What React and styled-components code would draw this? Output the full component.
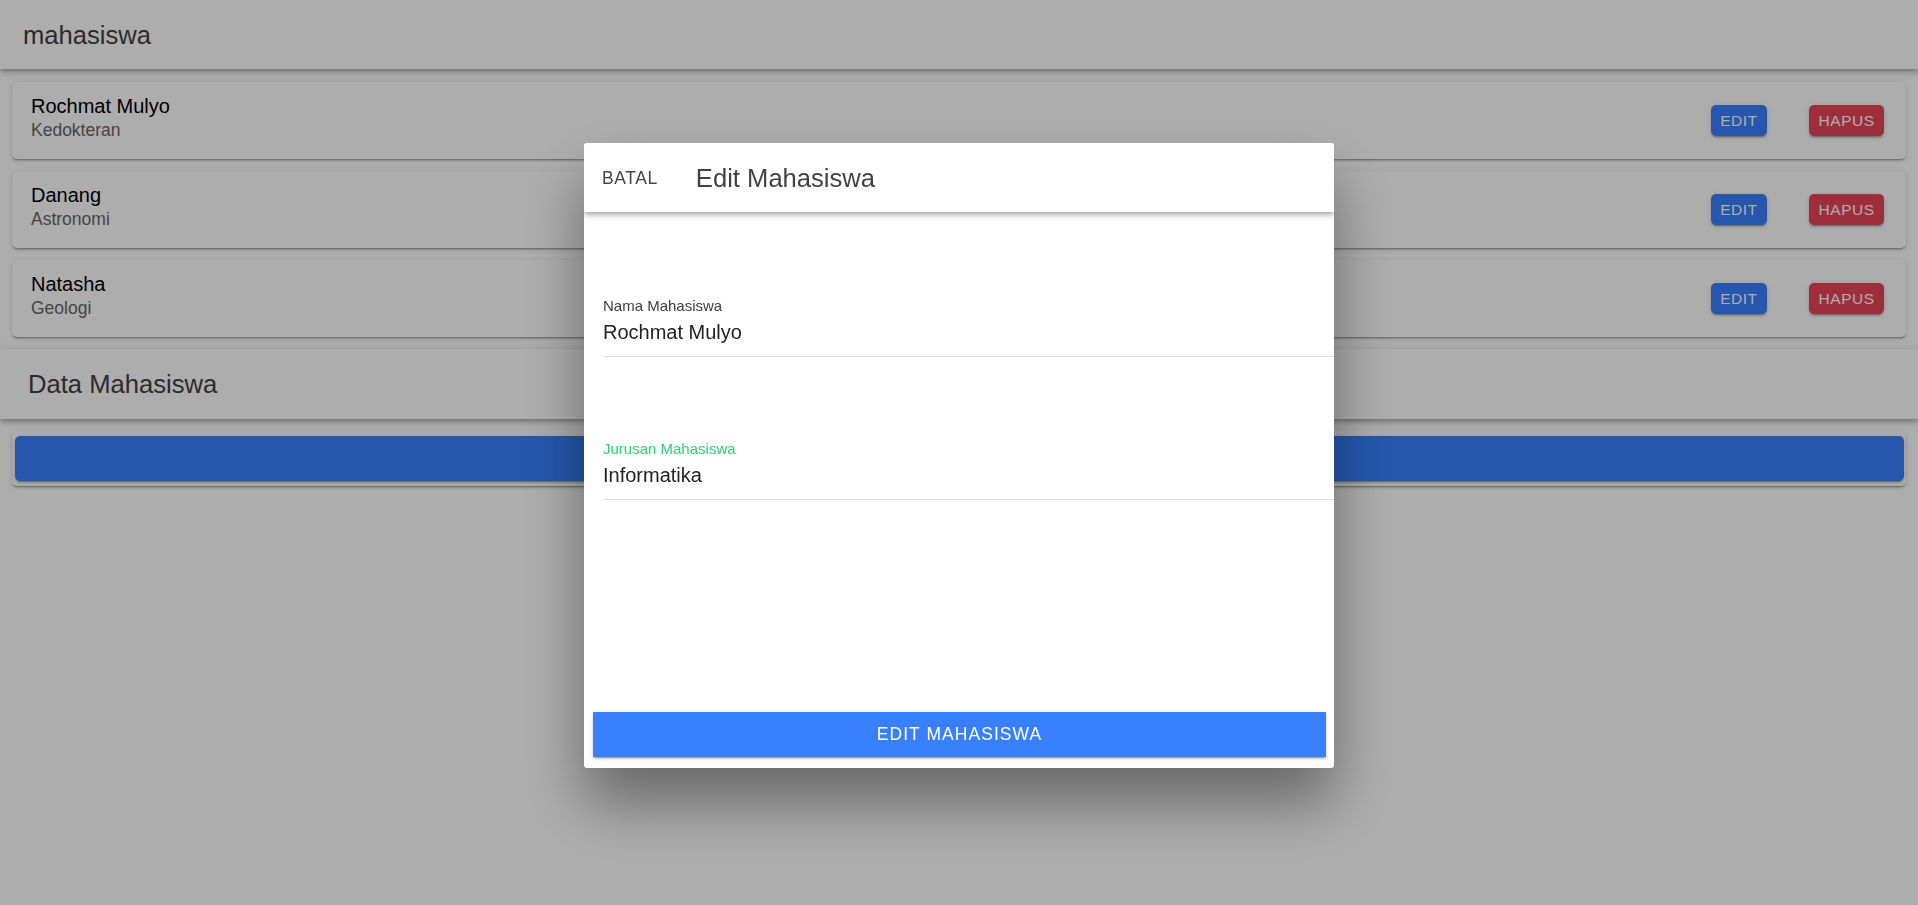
import React from "react";
import styled, { createGlobalStyle } from "styled-components";

const GlobalStyle = createGlobalStyle`
  html, body {
    margin: 0;
    padding: 0;
    background: #ffffff;
    font-family: "Liberation Sans", Arial, sans-serif;
  }
  * { box-sizing: border-box; }
`;

const toolbarShadow =
  "0 2px 4px -1px rgba(0,0,0,0.2), 0 4px 5px 0 rgba(0,0,0,0.14), 0 1px 10px 0 rgba(0,0,0,0.12)";
const cardShadow =
  "0 3px 1px -2px rgba(0,0,0,0.2), 0 2px 2px 0 rgba(0,0,0,0.14), 0 1px 5px 0 rgba(0,0,0,0.12)";

const Page = styled.div`
  min-height: 905px;
  display: flex;
  flex-direction: column;
  background: #fff;
`;

const Toolbar = styled.div`
  position: relative;
  z-index: 2;
  height: ${(p) => p.$h || 69}px;
  display: flex;
  align-items: center;
  padding-left: ${(p) => p.$pad || 23}px;
  background: #fff;
  box-shadow: ${toolbarShadow};
`;

const Title = styled.div`
  font-size: 25.6px;
  line-height: 30px;
  color: #424242;
`;

const CardList = styled.div`
  display: flex;
  flex-direction: column;
  gap: 12px;
  padding: ${(p) => p.$pad};
`;

const Card = styled.div`
  background: #fff;
  border-radius: 5px;
  box-shadow: ${cardShadow};
`;

const ItemCard = styled(Card)`
  height: 77px;
  display: flex;
  align-items: center;
  padding: 0 22px 0 19px;
`;

const ItemText = styled.div`
  flex: 1;
  display: flex;
  flex-direction: column;
  gap: 2.5px;
  padding-bottom: 6px;
`;

const Name = styled.div`
  font-size: 20px;
  line-height: 24px;
  color: #000;
`;

const Desc = styled.div`
  font-size: 17.5px;
  line-height: 21px;
  color: #666;
`;

const Actions = styled.div`
  display: flex;
  align-items: center;
  gap: 42px;
`;

const SmallButton = styled.button`
  height: 31px;
  padding: 0 9.5px;
  border: none;
  border-radius: 5px;
  background: ${(p) => p.$color};
  color: #fff;
  font-family: "Liberation Sans", Arial, sans-serif;
  font-size: 15.5px;
  letter-spacing: 0.5px;
  text-transform: uppercase;
  box-shadow: 0 3px 1px -2px rgba(0,0,0,0.2), 0 2px 2px 0 rgba(0,0,0,0.14), 0 1px 5px 0 rgba(0,0,0,0.12);
`;

const ButtonCard = styled(Card)`
  padding: 5px 2.5px;
`;

const BlockButton = styled.div`
  height: 45px;
  border-radius: 5px;
  background: #3880ff;
  box-shadow: 0 3px 1px -2px rgba(0,0,0,0.2), 0 2px 2px 0 rgba(0,0,0,0.14), 0 1px 5px 0 rgba(0,0,0,0.12);
`;

const Backdrop = styled.div`
  position: fixed;
  inset: 0;
  background: rgba(0, 0, 0, 0.32);
  z-index: 10;
`;

const ModalLayer = styled.div`
  position: fixed;
  inset: 0;
  z-index: 11;
  display: flex;
  justify-content: center;
  align-items: flex-start;
  padding-top: 143px;
`;

const Modal = styled.div`
  width: 750px;
  height: 625px;
  background: #fff;
  border-radius: 3px;
  box-shadow: 0 35px 60px rgba(0, 0, 0, 0.4);
  display: flex;
  flex-direction: column;
  overflow: hidden;
`;

const ModalHeader = styled.div`
  position: relative;
  z-index: 2;
  height: 69px;
  flex: none;
  display: flex;
  align-items: center;
  gap: 38px;
  padding-left: 18px;
  background: #fff;
  box-shadow: ${toolbarShadow};
`;

const TextButton = styled.button`
  border: none;
  background: none;
  padding: 0;
  font-family: "Liberation Sans", Arial, sans-serif;
  font-size: 17.5px;
  line-height: 20px;
  letter-spacing: 0.6px;
  color: #444;
  text-transform: uppercase;
`;

const ModalBody = styled.div`
  flex: 1;
  display: flex;
  flex-direction: column;
  padding: 1px 0 0 19px;
`;

const Field = styled.div`
  margin-top: ${(p) => p.$top}px;
  padding-bottom: 12px;
  border-bottom: 1px solid #dedede;
  display: flex;
  flex-direction: column;
  gap: 5.5px;
`;

const FieldLabel = styled.div`
  font-size: 15px;
  line-height: 18px;
  color: ${(p) => (p.$focused ? "#2dd36f" : "#3d3d3d")};
`;

const FieldValue = styled.div`
  font-size: 20px;
  line-height: 24px;
  color: #222;
`;

const SubmitButton = styled.button`
  flex: none;
  height: 45px;
  margin: 0 8px 11px 9px;
  border: none;
  background: #3880ff;
  color: #fff;
  font-family: "Liberation Sans", Arial, sans-serif;
  font-size: 17.5px;
  font-weight: 500;
  letter-spacing: 0.06em;
  text-transform: uppercase;
  box-shadow: 0 3px 1px -2px rgba(0,0,0,0.2), 0 2px 2px 0 rgba(0,0,0,0.14), 0 1px 5px 0 rgba(0,0,0,0.12);
`;

const students = [
  { name: "Rochmat Mulyo", major: "Kedokteran" },
  { name: "Danang", major: "Astronomi" },
  { name: "Natasha", major: "Geologi" },
];

export default function App() {
  return (
    <>
      <GlobalStyle />
      <Page>
        <Toolbar>
          <Title>mahasiswa</Title>
        </Toolbar>
        <CardList $pad="13px 12px 12px">
          {students.map((s) => (
            <ItemCard key={s.name}>
              <ItemText>
                <Name>{s.name}</Name>
                <Desc>{s.major}</Desc>
              </ItemText>
              <Actions>
                <SmallButton $color="#3880ff">Edit</SmallButton>
                <SmallButton $color="#eb445a">Hapus</SmallButton>
              </Actions>
            </ItemCard>
          ))}
        </CardList>
        <Toolbar $h={70} $pad={28}>
          <Title>Data Mahasiswa</Title>
        </Toolbar>
        <CardList $pad="12px 12px">
          <ButtonCard>
            <BlockButton />
          </ButtonCard>
        </CardList>
      </Page>
      <Backdrop />
      <ModalLayer>
        <Modal>
          <ModalHeader>
            <TextButton>Batal</TextButton>
            <Title>Edit Mahasiswa</Title>
          </ModalHeader>
          <ModalBody>
            <Field $top={83.5}>
              <FieldLabel>Nama Mahasiswa</FieldLabel>
              <FieldValue>Rochmat Mulyo</FieldValue>
            </Field>
            <Field $top={82.5}>
              <FieldLabel $focused>Jurusan Mahasiswa</FieldLabel>
              <FieldValue>Informatika</FieldValue>
            </Field>
          </ModalBody>
          <SubmitButton>Edit Mahasiswa</SubmitButton>
        </Modal>
      </ModalLayer>
    </>
  );
}
